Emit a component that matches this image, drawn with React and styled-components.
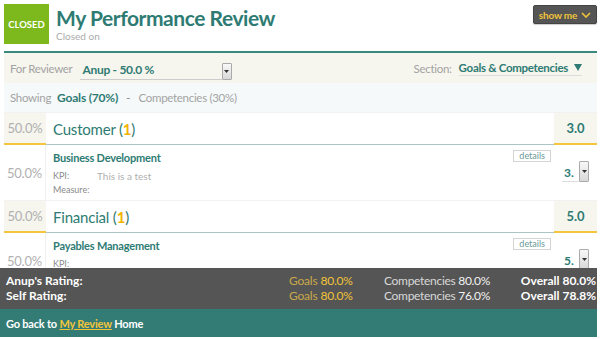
import styled, { createGlobalStyle } from 'styled-components';

const GlobalStyle = createGlobalStyle`
  html, body {
    margin: 0;
    padding: 0;
    background: #fff;
  }
  body {
    font-family: Lato, "Open Sans", sans-serif;
    color: #333;
  }
`;

const TEAL = '#2e7b73';
const BEIGE = '#f6f5ee';
const YELLOW = '#f3c63d';

const categories = [
  {
    name: 'Customer',
    count: 1,
    weight: '50.0%',
    score: '3.0',
    items: [
      { title: 'Business Development', weight: '50.0%', kpi: 'This is a test', rating: '3.', measure: true },
    ],
  },
  {
    name: 'Financial',
    count: 1,
    weight: '50.0%',
    score: '5.0',
    items: [
      { title: 'Payables Management', weight: '50.0%', kpi: '', rating: '5.', measure: false },
    ],
  },
];

const ratings = [
  { who: "Anup's Rating:", goals: '80.0%', comp: '80.0%', overall: '80.0%' },
  { who: 'Self Rating:', goals: '80.0%', comp: '76.0%', overall: '78.8%' },
];

const SelectButton = ({ small }) => (
  <SelectBtn $small={small}>
    <svg width="5" height="3" viewBox="0 0 5 3">
      <path d="M0 0h5L2.5 3z" fill="#333" />
    </svg>
  </SelectBtn>
);

const App = () => {
  return (
    <>
      <GlobalStyle />
      <Page>
        <Header>
          <Badge>CLOSED</Badge>
          <TitleBlock>
            <Title>My Performance Review</Title>
            <Sub>Closed on</Sub>
          </TitleBlock>
          <ShowMe>
            show me
            <svg width="10" height="6" viewBox="0 0 10 6">
              <path d="M1 1l4 4 4-4" stroke="#f0c23b" strokeWidth="1.6" fill="none" />
            </svg>
          </ShowMe>
        </Header>

        <Main>
          <ReviewerBar>
            <Label>For Reviewer</Label>
            <ReviewerSelect>
              <SelectValue>Anup - 50.0 %</SelectValue>
              <SelectButton />
            </ReviewerSelect>
            <SectionPick>
              <Label>Section:</Label>
              <SectionSelect>
                Goals &amp; Competencies
                <svg width="8" height="7" viewBox="0 0 8 7">
                  <path d="M0 0h8L4 7z" fill={TEAL} />
                </svg>
              </SectionSelect>
            </SectionPick>
          </ReviewerBar>

          <ShowingBar>
            <Label>Showing</Label>
            <ActiveTab>Goals (70%)</ActiveTab>
            <Dash>-</Dash>
            <Label>Competencies (30%)</Label>
          </ShowingBar>

          <Table>
            {categories.map((cat) => (
              <Group key={cat.name}>
                <CategoryRow>
                  <WeightCell $head>{cat.weight}</WeightCell>
                  <CategoryName>
                    {cat.name} (<Count>{cat.count}</Count>)
                  </CategoryName>
                  <ScoreCell>{cat.score}</ScoreCell>
                </CategoryRow>
                {cat.items.map((item) => (
                  <ItemRow key={item.title}>
                    <WeightCell>{item.weight}</WeightCell>
                    <ItemBody>
                      <ItemTop>
                        <ItemTitle>{item.title}</ItemTitle>
                        <Details>details</Details>
                      </ItemTop>
                      <Field>
                        <FieldLabel>KPI:</FieldLabel>
                        <FieldValue>{item.kpi}</FieldValue>
                      </Field>
                      {item.measure && (
                        <Field>
                          <FieldLabel>Measure:</FieldLabel>
                        </Field>
                      )}
                    </ItemBody>
                    <RatingCell>
                      <RatingSelect>
                        <RatingValue>{item.rating}</RatingValue>
                        <SelectButton small />
                      </RatingSelect>
                    </RatingCell>
                  </ItemRow>
                ))}
              </Group>
            ))}
          </Table>
        </Main>

        <Footer>
          <RatingBar>
            {ratings.map((r) => (
              <RatingLine key={r.who}>
                <Who>{r.who}</Who>
                <Goals>
                  Goals <b>{r.goals}</b>
                </Goals>
                <Comp>
                  Competencies <b>{r.comp}</b>
                </Comp>
                <Overall>Overall {r.overall}</Overall>
              </RatingLine>
            ))}
          </RatingBar>
          <BackBar>
            Go back to <BackLink href="#">My Review</BackLink> Home
          </BackBar>
        </Footer>
      </Page>
    </>
  );
};

export default App;

const Page = styled.div`
  width: 600px;
  height: 339px;
  display: flex;
  flex-direction: column;
  overflow: hidden;
`;

const Header = styled.div`
  display: flex;
  align-items: flex-start;
  padding: 4px 3px 0 4px;
  height: 51px;
  box-sizing: border-box;
`;

const Badge = styled.div`
  width: 45px;
  height: 40px;
  background: #7db91c;
  color: #fff;
  font-size: 9.5px;
  font-weight: 700;
  display: flex;
  align-items: center;
  justify-content: center;
`;

const TitleBlock = styled.div`
  margin-left: 7px;
  display: flex;
  flex-direction: column;
`;

const Title = styled.h1`
  margin: 0;
  font-size: 21px;
  font-weight: 700;
  letter-spacing: -0.45px;
  color: ${TEAL};
  line-height: 26px;
  margin-top: 1px;
`;

const Sub = styled.div`
  font-size: 10px;
  color: #aaa;
  line-height: 12px;
  margin-top: -1px;
`;

const ShowMe = styled.button`
  margin-left: auto;
  margin-top: 1px;
  width: 64px;
  height: 19px;
  background: #555;
  border: 1px solid #444;
  border-radius: 2px;
  color: #f0c23b;
  font-family: inherit;
  font-size: 10px;
  font-weight: 700;
  letter-spacing: -0.2px;
  display: flex;
  align-items: center;
  justify-content: center;
  gap: 4px;
  padding: 0;
  box-shadow: 0 1px 1px rgba(0, 0, 0, 0.2);
`;

const Main = styled.div`
  flex: 1;
  overflow: hidden;
  margin: 0 3px 0 4px;
  border-top: 2px solid #3a8a80;
`;

const ReviewerBar = styled.div`
  display: flex;
  align-items: center;
  height: 30px;
  background: ${BEIGE};
  padding: 0 15px 0 6px;
`;

const Label = styled.span`
  font-size: 11.5px;
  letter-spacing: -0.3px;
  color: #a3a3a3;
`;

const ReviewerSelect = styled.div`
  display: flex;
  align-items: flex-end;
  margin-left: 7px;
  width: 152px;
  height: 20px;
  margin-top: 4px;
`;

const SelectValue = styled.span`
  flex: 1;
  font-size: 12px;
  font-weight: 700;
  letter-spacing: -0.3px;
  color: ${TEAL};
  border-bottom: 1px solid #ccc;
  padding: 0 0 1px 3px;
  line-height: 17px;
`;

const SelectBtn = styled.span`
  width: 10px;
  height: ${(p) => (p.$small ? '21px' : '17px')};
  border: 1px solid #aaa;
  border-radius: 1px;
  background: linear-gradient(#f8f8f8, #d8d8d8);
  display: flex;
  align-items: center;
  justify-content: center;
  box-sizing: border-box;
`;

const SectionPick = styled.div`
  margin-left: auto;
  display: flex;
  align-items: center;
  gap: 7px;
`;

const SectionSelect = styled.span`
  display: flex;
  align-items: center;
  gap: 6px;
  font-size: 11.5px;
  font-weight: 700;
  letter-spacing: -0.3px;
  color: ${TEAL};
  border-bottom: 1px solid #ddd;
  padding-bottom: 1px;
`;

const ShowingBar = styled.div`
  display: flex;
  align-items: center;
  gap: 6px;
  height: 29px;
  background: #f5f9fa;
  padding: 0 6px;
`;

const ActiveTab = styled.span`
  font-size: 12px;
  font-weight: 700;
  letter-spacing: -0.2px;
  color: ${TEAL};
`;

const Dash = styled.span`
  font-size: 12px;
  color: #888;
  margin: 0 2px;
`;

const Table = styled.div`
  display: flex;
  flex-direction: column;
`;

const Group = styled.div``;

const CategoryRow = styled.div`
  display: grid;
  grid-template-columns: 42px 1fr 43px;
  height: 32px;
  border-top: 1px solid #f2f2f2;
`;

const WeightCell = styled.div`
  display: flex;
  align-items: center;
  justify-content: center;
  font-size: 13px;
  letter-spacing: -0.2px;
  color: #b0b0b0;
  background: ${(p) => (p.$head ? BEIGE : '#fff')};
  border-bottom: ${(p) => (p.$head ? `2px solid ${YELLOW}` : 'none')};
  border-right: ${(p) => (p.$head ? 'none' : '1px solid #f0f0f0')};
`;

const CategoryName = styled.div`
  display: flex;
  align-items: center;
  padding-left: 7px;
  font-size: 15px;
  letter-spacing: -0.2px;
  color: ${TEAL};
  border-bottom: 1px solid #a9c6c5;
  white-space: pre;
`;

const Count = styled.span`
  color: #f0b400;
  font-weight: 700;
`;

const ScoreCell = styled.div`
  display: flex;
  align-items: center;
  justify-content: center;
  background: ${BEIGE};
  border-bottom: 2px solid ${YELLOW};
  font-size: 13px;
  font-weight: 700;
  color: ${TEAL};
`;

const ItemRow = styled.div`
  display: grid;
  grid-template-columns: 42px 1fr 43px;
  height: 55px;
`;

const ItemBody = styled.div`
  padding: 4px 3px 0 7px;
  display: flex;
  flex-direction: column;
`;

const ItemTop = styled.div`
  display: flex;
  align-items: flex-start;
  justify-content: space-between;
  height: 20px;
`;

const ItemTitle = styled.span`
  font-size: 11px;
  font-weight: 700;
  letter-spacing: -0.2px;
  color: ${TEAL};
  margin-top: 2px;
`;

const Details = styled.span`
  font-size: 9px;
  color: #6b9a99;
  border: 1px solid #d4d4d4;
  padding: 0 5px;
  line-height: 10px;
  margin-top: 1px;
`;

const Field = styled.div`
  display: flex;
  font-size: 9px;
  line-height: 14px;
`;

const FieldLabel = styled.span`
  width: 44px;
  color: #8a8a8a;
`;

const FieldValue = styled.span`
  color: #b0b0b0;
  font-size: 10px;
`;

const RatingCell = styled.div`
  display: flex;
  align-items: flex-start;
  justify-content: center;
  padding-top: 16px;
`;

const RatingSelect = styled.div`
  display: flex;
  align-items: flex-end;
`;

const RatingValue = styled.span`
  font-size: 12px;
  font-weight: 700;
  color: ${TEAL};
  width: 17px;
  border-bottom: 1px solid #ddd;
  padding-left: 2px;
  line-height: 16px;
  box-sizing: border-box;
`;

const Footer = styled.div`
  margin: 0 3px 2px 0;
`;

const RatingBar = styled.div`
  background: #555;
  padding: 5px 1px 4px 6px;
  height: 41px;
  box-sizing: border-box;
`;

const RatingLine = styled.div`
  display: grid;
  grid-template-columns: 283px 95px 1fr auto;
  font-size: 12px;
  line-height: 15px;
`;

const Who = styled.span`
  color: #fff;
  font-weight: 700;
`;

const Goals = styled.span`
  color: #c9a84a;
  letter-spacing: -0.2px;
  b {
    color: #f2c43a;
    font-weight: 400;
  }
`;

const Comp = styled.span`
  color: #d8d8d8;
  letter-spacing: -0.3px;
  b {
    color: #f2f2f2;
    font-weight: 400;
  }
`;

const Overall = styled.span`
  color: #fff;
  font-weight: 700;
`;

const BackBar = styled.div`
  background: #337c75;
  height: 28px;
  display: flex;
  align-items: center;
  padding-left: 6px;
  font-size: 11px;
  font-weight: 700;
  letter-spacing: -0.2px;
  color: #fff;
  white-space: pre;
`;

const BackLink = styled.a`
  color: #f2c43a;
  text-decoration: underline;
`;
